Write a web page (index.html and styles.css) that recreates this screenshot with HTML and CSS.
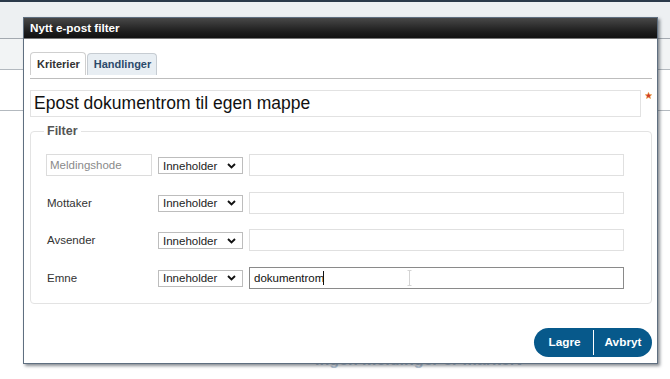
FILE: index.html
```html
<!DOCTYPE html>
<html lang="no">
<head>
<meta charset="utf-8">
<title>Nytt e-post filter</title>
<link rel="stylesheet" href="styles.css">
</head>
<body>
<div class="page">
  <div class="topbar"></div>
  <div class="hdr"></div>
  <div class="list-row r1"></div>
  <div class="list-row r2"></div>
  <div class="empty">Ingen meldinger er markert</div>
</div>

<div class="dialog">
  <div class="titlebar">Nytt e-post filter</div>
  <div class="dbody">
    <div class="tabs">
      <div class="tab active">Kriterier</div>
      <div class="tab">Handlinger</div>
    </div>

    <div class="name-row">
      <div class="name-input">Epost dokumentrom til egen mappe</div>
      <svg class="req" width="7" height="7" viewBox="0 0 10 10"><polygon points="5,0.5 6.3,3.6 9.6,3.8 7.1,6 7.9,9.4 5,7.6 2.1,9.4 2.9,6 0.4,3.8 3.7,3.6" fill="#d23a2a" stroke="#e9a23b" stroke-width="0.8"/></svg>
    </div>

    <fieldset class="filter">
      <legend>Filter</legend>
      <div class="rows">
        <div class="frow">
          <div class="lbl-box">Meldingshode</div>
          <div class="select"><span>Inneholder</span><svg width="9" height="6" viewBox="0 0 9 6"><path d="M1 1 L4.5 4.5 L8 1" fill="none" stroke="#111" stroke-width="1.9"/></svg></div>
          <div class="tinput"></div>
        </div>
        <div class="frow">
          <div class="lbl">Mottaker</div>
          <div class="select"><span>Inneholder</span><svg width="9" height="6" viewBox="0 0 9 6"><path d="M1 1 L4.5 4.5 L8 1" fill="none" stroke="#111" stroke-width="1.9"/></svg></div>
          <div class="tinput"></div>
        </div>
        <div class="frow">
          <div class="lbl">Avsender</div>
          <div class="select"><span>Inneholder</span><svg width="9" height="6" viewBox="0 0 9 6"><path d="M1 1 L4.5 4.5 L8 1" fill="none" stroke="#111" stroke-width="1.9"/></svg></div>
          <div class="tinput"></div>
        </div>
        <div class="frow">
          <div class="lbl">Emne</div>
          <div class="select"><span>Inneholder</span><svg width="9" height="6" viewBox="0 0 9 6"><path d="M1 1 L4.5 4.5 L8 1" fill="none" stroke="#111" stroke-width="1.9"/></svg></div>
          <div class="tinput focus"><span class="val">dokumentrom</span><span class="caret"></span>
            <svg class="ibeam" width="5" height="16" viewBox="0 0 5 16"><path d="M0.5 0.5 H4.5 M2.5 0.5 V15.5 M0.5 15.5 H4.5" fill="none" stroke="#d4d4d4" stroke-width="1"/></svg>
          </div>
        </div>
      </div>
    </fieldset>

    <div class="actions">
      <div class="btn-group">
        <button class="btn">Lagre</button>
        <button class="btn">Avbryt</button>
      </div>
    </div>
  </div>
</div>
</body>
</html>
```

FILE: styles.css
```css
html, body {
  margin: 0;
  padding: 0;
}
body {
  font-family: "Liberation Sans", Arial, sans-serif;
  background: #ffffff;
  width: 670px;
  height: 379px;
  overflow: hidden;
  position: relative;
}

/* backdrop page */
.topbar {
  height: 2px;
  background: #2b3a4a;
}
.hdr {
  height: 36px;
  background: #edf0f2;
  border-bottom: 1px solid #a3a9b0;
}
.list-row {
  border-bottom: 1px solid #b3b9bf;
}
.r1 {
  height: 30px;
  background: #f2f4f5;
}
.r2 {
  height: 40px;
  background: #ffffff;
}
.empty {
  margin: 240px 0 0 315px;
  font-size: 16px;
  line-height: 18px;
  font-weight: bold;
  color: #b7c7d8;
}

/* dialog */
.dialog {
  position: absolute;
  left: 23px;
  top: 17px;
  width: 635px;
  height: 347px;
  box-sizing: border-box;
  background: #ffffff;
  border: 1px solid #5f6f80;
  box-shadow: 2px 2px 3px rgba(40, 50, 60, 0.55);
}
.titlebar {
  height: 20px;
  line-height: 20px;
  padding-left: 6px;
  background: linear-gradient(#484848, #1c1c1c 70%, #111111);
  color: #ffffff;
  font-size: 11.7px;
  font-weight: bold;
  border-bottom: 1px solid #777;
  margin-bottom: -1px;
}
.dbody {
  padding: 14px 5px 0 6px;
}

/* tabs */
.tabs {
  display: flex;
  align-items: flex-end;
  gap: 1px;
  height: 23px;
  padding-bottom: 3px;
  border-bottom: 1px solid #bdbdbd;
}
.tab {
  box-sizing: border-box;
  height: 22px;
  line-height: 21px;
  padding: 0 5px 0 6px;
  border: 1px solid #c6ccd2;
  border-bottom: none;
  border-radius: 4px 4px 0 0;
  font-size: 11px;
  font-weight: bold;
  color: #2c4a6b;
  background: #e8eef3;
}
.tab.active {
  height: 23px;
  line-height: 23px;
  padding: 0 5px 0 6px;
  background: #ffffff;
  color: #333333;
  border-color: #cfcfcf;
}

/* name input */
.name-row {
  display: flex;
  align-items: flex-start;
  margin-top: 11px;
}
.name-input {
  box-sizing: border-box;
  width: 611px;
  height: 27px;
  line-height: 25px;
  padding-left: 3px;
  border: 1px solid #e2e2e2;
  font-size: 17.5px;
  color: #111111;
}
.req {
  margin: 2px 0 0 4px;
}

/* fieldset */
.filter {
  margin: 7px 0 0 0;
  padding: 15px 0 14px 14px;
  border: 1px solid #e3e3e3;
  border-radius: 4px;
  min-width: 0;
}
.filter legend {
  padding: 0 3px;
  margin-left: -1px;
  font-size: 12.5px;
  line-height: 15px;
  font-weight: bold;
  color: #555555;
}
.rows {
  display: flex;
  flex-direction: column;
  gap: 15.5px;
  padding-left: 1px;
}
.frow {
  display: flex;
  align-items: center;
  gap: 6px;
  height: 22px;
  font-size: 11.5px;
}
.lbl, .lbl-box {
  box-sizing: border-box;
  width: 106px;
  height: 22px;
  line-height: 22px;
  color: #333333;
}
.lbl {
  padding-left: 1px;
}
.lbl-box {
  border: 1px solid #dcdcdc;
  line-height: 20px;
  padding-left: 3px;
  color: #8a8a8a;
}
.select {
  box-sizing: border-box;
  width: 85px;
  height: 17px;
  display: flex;
  align-items: center;
  justify-content: space-between;
  padding: 0 6px 0 4px;
  border: 1px solid #bdbdbd;
  background: #ffffff;
  color: #222222;
  margin-top: 1px;
}
.select svg {
  display: block;
}
.tinput {
  box-sizing: border-box;
  width: 375px;
  height: 22px;
  border: 1px solid #e0e0e0;
  display: flex;
  align-items: center;
  padding-left: 4px;
  color: #111111;
  position: relative;
}
.tinput.focus {
  border-color: #8a8a8a;
}
.caret {
  display: inline-block;
  width: 1px;
  height: 14px;
  background: #111;
  margin-left: -1px;
}
.ibeam {
  position: absolute;
  left: 157px;
  top: 2px;
}

/* buttons */
.actions {
  display: flex;
  justify-content: flex-end;
  margin-top: 24px;
}
.btn-group {
  display: flex;
  height: 29px;
  border-radius: 15px;
  background: #07598b;
  overflow: hidden;
  align-items: center;
}
.btn {
  background: transparent;
  border: none;
  color: #ffffff;
  font-family: "Liberation Sans", Arial, sans-serif;
  font-size: 11.8px;
  font-weight: bold;
  height: 29px;
  padding: 0;
  cursor: pointer;
}
.btn:first-child {
  width: 60px;
  padding-left: 2px;
  border-right: 1px solid #ffffff;
  height: 25px;
}
.btn:last-child {
  width: 58px;
}
```
